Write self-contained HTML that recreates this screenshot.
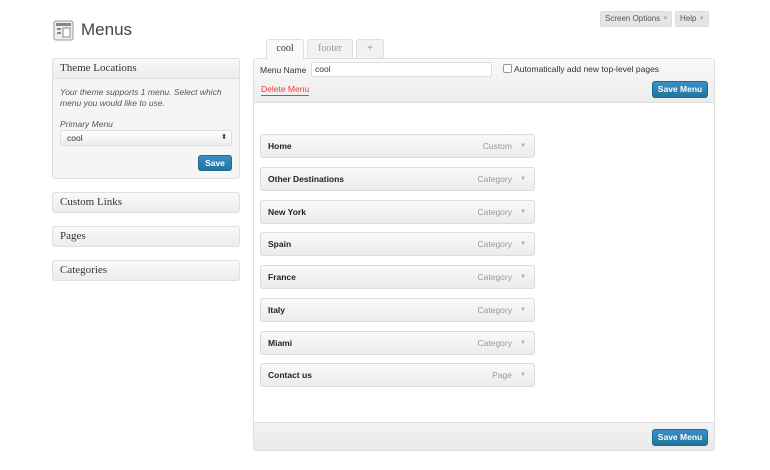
<!DOCTYPE html>
<html><head><style>
*{box-sizing:border-box;margin:0;padding:0}
body{width:770px;height:470px;background:#fff;font-family:"Liberation Sans",Arial,sans-serif;font-size:9px;color:#333;position:relative;overflow:hidden}
.a{position:absolute}
.serif{font-family:"Liberation Serif",Georgia,serif}
.box{position:absolute;border:1px solid #dfdfdf;border-radius:3px;background:linear-gradient(#f9f9f9,#ececec)}
.btn{position:absolute;background:linear-gradient(#3a8fc8,#21759b);border:1px solid #1e6a92;border-radius:3px;color:#fff;font-weight:bold;font-size:8.5px;text-align:center;line-height:14px}
.item{position:absolute;left:260px;width:275px;height:24px;border:1px solid #dcdcdc;border-radius:3px;background:linear-gradient(#f9f9f9,#ececec);font-weight:bold;font-size:8.5px;line-height:22px;padding-left:7px;color:#222}
.item span{position:absolute;right:22px;font-weight:normal;color:#999}
.item i{position:absolute;right:8px;top:0;line-height:22px;font-style:normal;color:#aaa;font-size:6px}
.tab{position:absolute;top:39px;height:20px;border:1px solid #dfdfdf;border-bottom:none;border-radius:3px 3px 0 0;text-align:center;line-height:18px;font-size:10px}
.top{position:absolute;top:11px;height:16px;background:#e5e5e5;border:1px solid #ddd;border-radius:2px;color:#555;font-size:8px;line-height:14px;padding-left:4px;white-space:nowrap}
.top b{font-weight:normal;color:#aaa;font-size:6px;vertical-align:1px}
</style></head><body>
<svg class="a" style="left:53px;top:20px" width="21" height="21" viewBox="0 0 21 21"><rect x="1" y="1" width="19" height="19" rx="2" fill="#eee" stroke="#999"/><rect x="3" y="3" width="15" height="3" fill="#888"/><rect x="4" y="8" width="4" height="2" fill="#888"/><rect x="4" y="12" width="4" height="2" fill="#888"/><rect x="10" y="8" width="7" height="9" fill="#fff" stroke="#888"/></svg>
<div class="a" style="left:81px;top:20px;font-size:17px;color:#444">Menus</div>
<div class="top" style="left:600px;width:72px">Screen Options <b>▼</b></div>
<div class="top" style="left:675px;width:34px">Help <b>▼</b></div>

<div class="box" style="left:52px;top:58px;width:188px;height:121px;background:#f5f5f5">
 <div style="height:20px;border-bottom:1px solid #dfdfdf;background:linear-gradient(#f9f9f9,#ececec);padding-left:7px;line-height:19px;font-size:11px" class="serif">Theme Locations</div>
 <div style="padding:8px 7px;font-style:italic;color:#555;font-size:8.5px;line-height:11px">Your theme supports 1 menu. Select which menu you would like to use.</div>
 <div style="padding:0 7px;font-style:italic;color:#555;font-size:8.5px;margin-top:2px">Primary Menu</div>
 <div class="a" style="left:7px;top:71px;width:172px;height:16px;border:1px solid #ddd;border-radius:3px;background:linear-gradient(#fff,#ececec);padding-left:6px;line-height:14px;font-size:8.5px">cool<span class="a" style="right:4px;font-size:7px">⬍</span></div>
 <div class="btn" style="left:145px;top:96px;width:34px;height:16px">Save</div>
</div>
<div class="box serif" style="left:52px;top:192px;width:188px;height:21px;font-size:11px;line-height:19px;padding-left:7px">Custom Links</div>
<div class="box serif" style="left:52px;top:226px;width:188px;height:21px;font-size:11px;line-height:19px;padding-left:7px">Pages</div>
<div class="box serif" style="left:52px;top:260px;width:188px;height:21px;font-size:11px;line-height:19px;padding-left:7px">Categories</div>

<div class="tab serif" style="left:266px;width:38px;background:#f9f9f9;height:20px;z-index:2;color:#333">cool</div>
<div class="tab serif" style="left:307px;width:46px;background:#f1f1f1;color:#999">footer</div>
<div class="tab" style="left:356px;width:28px;background:#f1f1f1;color:#999">+</div>

<div class="a" style="left:253px;top:58px;width:462px;height:393px;border:1px solid #dfdfdf;border-radius:3px;background:#fff">
 <div style="height:44px;background:linear-gradient(#f9f9f9,#ececec);border-bottom:1px solid #dfdfdf;position:relative">
  <div class="a" style="left:6px;top:6px;font-size:8.5px">Menu Name</div>
  <div class="a" style="left:57px;top:3px;width:181px;height:15px;background:#fff;border:1px solid #ddd;border-radius:2px;padding-left:3px;line-height:13px;font-size:8.5px">cool</div>
  <div class="a" style="left:249px;top:5px;width:9px;height:9px;border:1px solid #999;border-radius:2px;background:#fff"></div>
  <div class="a" style="left:260px;top:5px;font-size:8.5px">Automatically add new top-level pages</div>
  <div class="a" style="left:7px;top:25px;font-size:8.5px;color:#f33;border-bottom:1px solid #f33;padding-bottom:1px">Delete Menu</div>
  <div class="btn" style="left:398px;top:22px;width:56px;height:17px">Save Menu</div>
 </div>
 <div class="a" style="left:0;bottom:0;width:460px;height:28px;background:linear-gradient(#f3f3f3,#e9e9e9);border-top:1px solid #dfdfdf">
  <div class="btn" style="left:398px;top:6px;width:56px;height:17px">Save Menu</div>
 </div>
</div>

<div class="item" style="top:134px">Home<span>Custom</span><i>▼</i></div>
<div class="item" style="top:167px">Other Destinations<span>Category</span><i>▼</i></div>
<div class="item" style="top:200px">New York<span>Category</span><i>▼</i></div>
<div class="item" style="top:232px">Spain<span>Category</span><i>▼</i></div>
<div class="item" style="top:265px">France<span>Category</span><i>▼</i></div>
<div class="item" style="top:298px">Italy<span>Category</span><i>▼</i></div>
<div class="item" style="top:331px">Miami<span>Category</span><i>▼</i></div>
<div class="item" style="top:363px">Contact us<span>Page</span><i>▼</i></div>
</body></html>
